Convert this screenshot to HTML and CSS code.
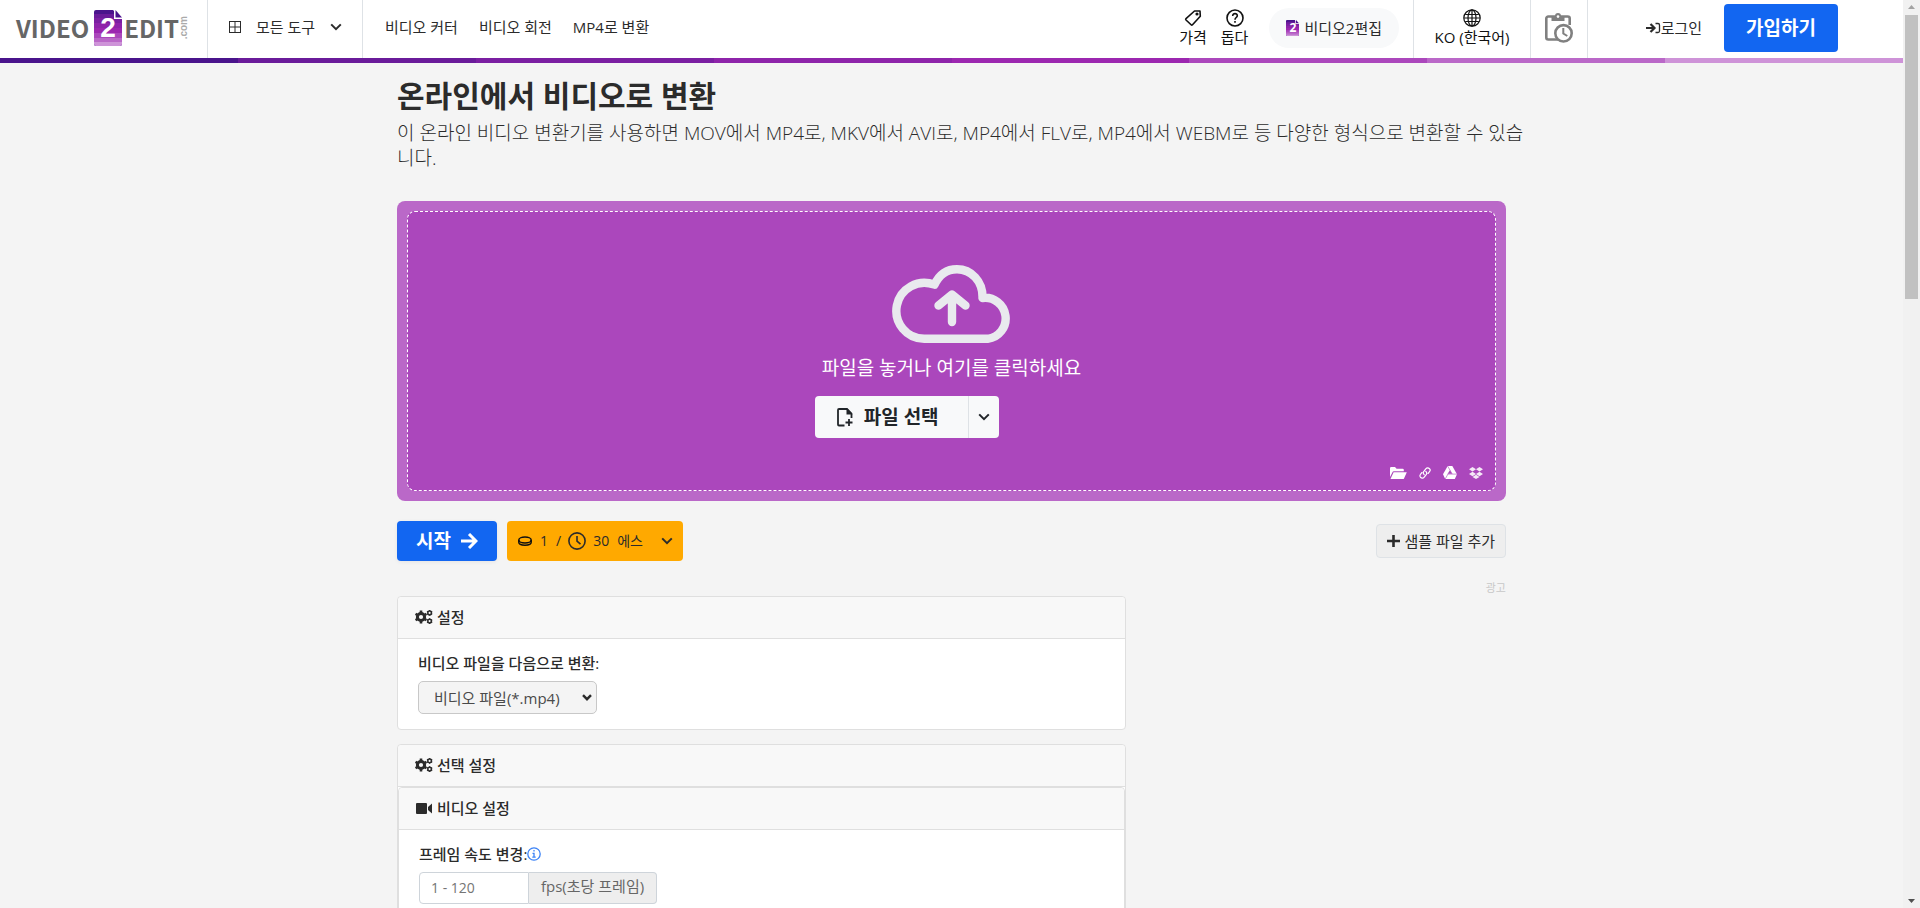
FILE: index.html
```html
<!DOCTYPE html>
<html lang="ko">
<head>
<meta charset="utf-8">
<meta name="viewport" content="width=device-width, initial-scale=1">
<title>온라인에서 비디오로 변환</title>
<link rel="stylesheet" href="styles.css">
</head>
<body>
<svg class="defs" aria-hidden="true">
  <symbol id="chevron" viewBox="0 0 12 8"><path d="M1.2 1.4 6 6.2l4.800-4.800" fill="none" stroke="currentColor" stroke-width="2"/></symbol>
  <symbol id="gears" viewBox="0 0 18 14">
    <circle cx="6" cy="7" r="3.600" fill="none" stroke="currentColor" stroke-width="3"/>
    <path d="M6 .6v2.400M6 11v2.400M.5 3.800l2 1.200M9.500 9l2 1.200M.5 10.200l2-1.200M9.500 5l2-1.200" stroke="currentColor" stroke-width="2.600"/>
    <circle cx="14.600" cy="2.900" r="1.800" fill="none" stroke="currentColor" stroke-width="1.500"/>
    <circle cx="14.600" cy="11.100" r="1.800" fill="none" stroke="currentColor" stroke-width="1.500"/>
    <path d="M14.600 0v1M14.600 4.800v1M12 1.400l1 .6M16.200 3.800l1 .6M12 4.400l1-.6M16.200 2l1-.6M14.600 8.200v1M14.600 13v1M12 9.600l1 .6M16.200 12l1 .6M12 12.600l1-.6M16.200 10.200l1-.6" stroke="currentColor" stroke-width="1.300"/>
  </symbol>
  <symbol id="filetile" viewBox="0 0 28 36">
    <path d="M2 0h17l9 9v25a2 2 0 0 1-2 2H2a2 2 0 0 1-2-2V2a2 2 0 0 1 2-2z" fill="#4a148c"/>
    <path d="M0 4h28v28H0z" fill="#6a1b9a"/><path d="M0 8h28v24H0z" fill="#7b1fa2"/>
    <path d="M0 13h28v19H0z" fill="#8e24aa"/><path d="M0 18h28v14H0z" fill="#9c27b0"/>
    <path d="M0 23h28v9H0z" fill="#ab47bc"/><path d="M0 28h28v4H0z" fill="#ba68c8"/>
    <path d="M0 32h28v2a2 2 0 0 1-2 2H2a2 2 0 0 1-2-2z" fill="#ce93d8"/>
    <path d="M20 0h8v9h-8z" fill="#fff"/><path d="M21.500 0 28 7.500h-6.500z" fill="#4a148c"/>
  </symbol>
</svg>

<div class="page">
  <header class="topbar">
    <a class="logo" href="#" aria-label="VIDEO2EDIT.com">
      <span class="logo-word">VIDEO</span>
      <span class="logo-tile"><svg width="28" height="36"><use href="#filetile"/></svg><b>2</b></span>
      <span class="logo-word">EDIT</span>
      <span class="logo-com">.com</span>
    </a>
    <button class="all-tools" type="button">
      <svg width="12" height="12" viewBox="0 0 12 12" fill="none" stroke="currentColor"><rect x=".5" y=".5" width="11" height="11"/><path d="M6 0v12M0 6h12"/></svg>
      <span>모든 도구</span>
      <svg width="12" height="8"><use href="#chevron"/></svg>
    </button>
    <nav class="links">
      <a href="#">비디오 커터</a>
      <a href="#">비디오 회전</a>
      <a href="#">MP4로 변환</a>
    </nav>
    <nav class="aux">
      <a class="stacked" href="#">
        <svg width="18" height="18" viewBox="0 0 18 18" fill="none" stroke="currentColor" stroke-width="1.600" stroke-linejoin="round"><path d="M10.500 2h5.500l.3 5.200-7.800 8.600a1 1 0 0 1-1.400 0L2 11a1 1 0 0 1 0-1.400z"/><circle cx="13" cy="5" r=".8" fill="currentColor"/></svg>
        가격</a>
      <a class="stacked" href="#">
        <svg width="18" height="18" viewBox="0 0 18 18" fill="none" stroke="currentColor" stroke-width="1.600"><circle cx="9" cy="9" r="8"/><path d="M6.700 7.100C6.700 3.600 11.400 4 11.300 6.800 11.200 8.500 9 8.600 9 10.700M9 12v1.700"/></svg>
        돕다</a>
      <a class="pill" href="#"><span class="mini-tile"><svg width="13" height="16" viewBox="0 0 28 36" preserveAspectRatio="none"><use href="#filetile"/></svg><b>2</b></span>비디오2편집</a>
    </nav>
    <a class="stacked lang" href="#">
      <svg width="18" height="18" viewBox="0 0 18 18" fill="none" stroke="currentColor" stroke-width="1.200"><circle cx="9" cy="9" r="8.200"/><ellipse cx="9" cy="9" rx="4" ry="8.200"/><path d="M9 1v16M1 9h16M2.200 5.500h13.600M2.200 12.500h13.600"/></svg>
      KO (한국어)</a>
    <a class="history" href="#" aria-label="기록">
      <svg width="28" height="30" viewBox="0 0 28 30" fill="none" stroke="currentColor" stroke-width="2.600"><path d="M13 26.500H3.300a2 2 0 0 1-2-2V5.500a2 2 0 0 1 2-2h19.400a2 2 0 0 1 2 2V12"/><path d="M6.500 3v5h13V3h-3.500a3 3 0 0 0-6 0z" fill="currentColor" stroke="none"/><circle cx="13" cy="3.600" r="1.300" fill="#fff" stroke="none"/><circle cx="18.500" cy="20.300" r="8.200" fill="#fff"/><path d="M18.300 15v5.500l4 2.500" stroke-width="2"/></svg>
    </a>
    <div class="account">
      <a class="login" href="#"><svg width="15" height="12" viewBox="0 0 15 12" fill="none" stroke="currentColor"><path d="M0 6h8M4.500 2l4 4-4 4" stroke-width="2.200"/><path d="M9.500 1.500H12a1.500 1.500 0 0 1 1.500 1.500v6a1.500 1.500 0 0 1-1.500 1.500H9.500" stroke-width="1.300"/></svg>로그인</a>
      <a class="signup" href="#">가입하기</a>
    </div>
  </header>
  <div class="stripes"><i></i><i></i><i></i><i></i><i></i><i></i><i></i><i></i></div>

  <main class="container">
    <h1>온라인에서 비디오로 변환</h1>
    <p class="lead">이 온라인 비디오 변환기를 사용하면 MOV에서 MP4로, MKV에서 AVI로, MP4에서 FLV로, MP4에서 WEBM로 등 다양한 형식으로 변환할 수 있습니다.</p>

    <section class="dropzone">
      <div class="dropzone-inner">
        <div class="drop-content">
          <svg class="cloud" width="120" height="78" viewBox="0 0 120 78" fill="none" stroke="#e9eaee" stroke-width="8.400" stroke-linecap="round" stroke-linejoin="round"><path d="M32.200 73.800h63.500A20.200 20.200 0 0 0 90.500 33C91 16 79 4.200 65 4.200 55 4.200 47 10 42.500 19.700A28 28 0 1 0 32.200 73.800z"/><path d="M60 57V30M46.500 40.500 60 29.500l13.500 11"/></svg>
          <p>파일을 놓거나 여기를 클릭하세요</p>
          <div class="choose">
            <button class="choose-main" type="button"><svg width="17" height="19" viewBox="0 0 17 19" fill="none" stroke="currentColor" stroke-width="1.800"><path d="M7.500 17.500H2a1 1 0 0 1-1-1V2a1 1 0 0 1 1-1h8l4.500 4.500V10"/><path d="M9.500 0 15.500 6.500h-6z" fill="currentColor" stroke="none"/><path d="M12 11v7M8.500 14.500h7"/></svg>파일 선택</button>
            <button class="choose-more" type="button" aria-label="더 보기"><svg width="12" height="8"><use href="#chevron"/></svg></button>
          </div>
        </div>
        <div class="sources">
          <a href="#" aria-label="폴더"><svg width="17" height="12" viewBox="0 0 17 12" fill="currentColor"><path d="M0 10V1.200A1.200 1.200 0 0 1 1.200 0H5l1.600 1.700h6A1.200 1.200 0 0 1 13.800 3v1.300H4A1.800 1.800 0 0 0 2.300 5.400z"/><path d="M3.600 5.300h13.200L14 11.400a1 1 0 0 1-.9.6H.5z"/></svg></a>
          <a href="#" aria-label="링크"><svg width="12" height="12" viewBox="0 0 12 12" fill="none" stroke="currentColor" stroke-width="1.200" stroke-linecap="round"><path d="M5.200 7.600C3.900 6.400 4.200 5 5 4.100l2-2.400a2.300 2.300 0 0 1 3.500 3L9.200 6.400M6.800 4.400C8.100 5.600 7.800 7 7 7.900l-2 2.400a2.300 2.300 0 0 1-3.500-3L2.800 5.600"/></svg></a>
          <a href="#" aria-label="구글 드라이브"><svg width="14" height="13" viewBox="0 0 14 13" fill="currentColor"><path d="M4.700 0h4.600L14 8.300 11.800 13H2.200L0 8.300z"/><path d="M7 4.200 5 7.800h4z" fill="#ab47bc"/><path d="M4.600 0 9.200 8M14 8.100H4.600M2.200 13 6.800 4.800" stroke="#ab47bc" stroke-width=".6"/></svg></a>
          <a href="#" aria-label="드롭박스"><svg width="14" height="12" viewBox="0 0 14 12" fill="currentColor"><path d="M3.500 0 7 2.300 3.500 4.600 0 2.300zM10.500 0 14 2.300l-3.500 2.300L7 2.300zM3.500 4.700 7 7 3.500 9.200 0 7zM10.500 4.700 14 7l-3.500 2.200L7 7zM7 7.800l3.500 2.200L7 12 3.500 10z" opacity=".88"/></svg></a>
        </div>
      </div>
    </section>

    <div class="actions">
      <button class="start" type="button">시작<svg width="17" height="16" viewBox="0 0 17 16" fill="none" stroke="currentColor" stroke-width="3"><path d="M0 8h14M8 1l7 7-7 7"/></svg></button>
      <button class="cost" type="button">
        <svg width="14" height="10" viewBox="0 0 14 10" fill="none" stroke="#111" stroke-width="1.500"><ellipse cx="7" cy="4" rx="6.200" ry="3"/><path d="M.8 4v2.300C.8 8 3.500 9.200 7 9.200S13.200 8 13.200 6.300V4"/></svg>
        <span>1</span><span>/</span>
        <svg class="clock" width="18" height="18" viewBox="0 0 18 18" fill="none" stroke="currentColor" stroke-width="1.600"><circle cx="9" cy="9" r="8.100"/><path d="M9 4v5.200l3.500 3"/></svg>
        <span>30</span><span>에스</span>
        <svg class="cost-more" width="12" height="8"><use href="#chevron"/></svg>
      </button>
      <button class="sample" type="button"><svg width="13" height="12" viewBox="0 0 13 12" stroke="currentColor" stroke-width="2.600"><path d="M6.500 0v12M0 6h13"/></svg>샘플 파일 추가</button>
    </div>
    <div class="ad">광고</div>

    <div class="settings">
      <section class="card">
        <h2><svg width="18" height="14"><use href="#gears"/></svg>설정</h2>
        <div class="card-body">
          <label for="target">비디오 파일을 다음으로 변환:</label>
          <div class="select-wrap">
            <select id="target"><option>비디오 파일(*.mp4)</option></select>
            <svg width="10" height="7" viewBox="0 0 10 7" fill="none" stroke="currentColor" stroke-width="2.400"><path d="M1 1.200 5 5.200l4-4"/></svg>
          </div>
        </div>
      </section>
      <section class="card">
        <h2><svg width="18" height="14"><use href="#gears"/></svg>선택 설정</h2>
        <section class="card nested">
          <h2><svg width="17" height="11" viewBox="0 0 17 11" fill="currentColor"><rect width="11" height="11" rx="1"/><path d="M12 4l4-3.500v10L12 7z"/></svg>비디오 설정</h2>
          <div class="card-body">
            <label for="fps">프레임 속도 변경:<svg width="14" height="14" viewBox="0 0 14 14" fill="none" stroke="#3b82f6" stroke-width="1.300"><circle cx="7" cy="7" r="6.200"/><path d="M7 3v1.500M5.500 6.300H7V10M5.300 10.200h3.400"/></svg></label>
            <div class="input-group">
              <input id="fps" type="text" placeholder="1 - 120">
              <span>fps(초당 프레임)</span>
            </div>
          </div>
        </section>
      </section>
    </div>
  </main>
</div>

<div class="scrollbar" aria-hidden="true">
  <svg width="17" height="15" viewBox="0 0 17 15"><path d="M5 9h7L8.500 5z" fill="#a3a3a3"/></svg>
  <div class="track"><div class="thumb"></div></div>
  <svg width="17" height="15" viewBox="0 0 17 15"><path d="M5 6h7l-3.500 4z" fill="#505050"/></svg>
</div>
</body>
</html>
```

FILE: styles.css
```css
* { box-sizing: border-box; }
body {
  margin: 0;
  display: flex;
  height: 100vh;
  overflow: hidden;
  background: #f4f4f4;
  color: #2b2b2b;
  font: 15px/20px "Open Sans", "Noto Sans CJK KR", sans-serif;
}
a { color: inherit; text-decoration: none; }
button, input, select { font: inherit; color: inherit; }
button { border: 0; cursor: pointer; }
svg { flex: none; display: block; }
h1, h2, p { margin: 0; }
.defs { position: absolute; width: 0; height: 0; }
.page { flex: 1; min-width: 0; overflow: hidden; }

/* top bar */
.topbar { display: flex; height: 58px; background: #fff; white-space: nowrap; }
.logo { display: flex; align-items: center; width: 208px; padding: 0 0 2px 16px; border-right: 1px solid #dee2e6; color: #666; }
.logo-word { font: bold 24px/36px "Noto Sans CJK KR", sans-serif; }
.logo-tile, .mini-tile { display: grid; place-items: center; color: #fff; }
.logo-tile > *, .mini-tile > * { grid-area: 1 / 1; }
.logo-tile { margin: 0 2px 0 5px; }
.logo-tile b { font: bold 28px/36px "Liberation Sans", sans-serif; }
.logo-com { font: bold 10px/10px "Liberation Sans", sans-serif; color: #aaa; writing-mode: vertical-rl; transform: rotate(180deg); }
.all-tools { display: flex; align-items: center; gap: 15px; width: 155px; padding: 0 0 4px 21px; background: none; border-right: 1px solid #dee2e6; }
.links { display: flex; align-items: center; gap: 21px; padding: 0 0 4px 22px; }
.aux { display: flex; align-items: center; gap: 14px; margin-left: auto; padding-right: 14px; border-right: 1px solid #dee2e6; }
.stacked { display: flex; flex-direction: column; align-items: center; justify-content: center; padding-bottom: 4px; color: #111; line-height: 18px; }
.stacked svg { margin-bottom: 1px; }
.pill { display: flex; align-items: center; gap: 5px; height: 40px; margin: 0 0 2px 7px; padding: 0 17px; border-radius: 20px; background: #f8f9fa; }
.mini-tile b { font-size: 12px; line-height: 16px; }
.lang { width: 117px; border-right: 1px solid #dee2e6; }
.history { display: grid; place-items: center; width: 57px; padding-bottom: 2px; border-right: 1px solid #dee2e6; color: #808080; }
.account { display: flex; align-items: center; gap: 22px; width: 315px; padding: 0 65px 2px 0; justify-content: flex-end; }
.login { display: flex; align-items: center; }
.signup { padding: 0 22px; border-radius: 4px; background: #1266f1; color: #fff; font-size: 19px; line-height: 48px; font-weight: 700; }
.stripes { display: grid; grid-template-columns: repeat(8, 1fr); height: 5px; }
.stripes i:nth-child(1) { background: #4a148c; }
.stripes i:nth-child(2) { background: #6a1b9a; }
.stripes i:nth-child(3) { background: #7b1fa2; }
.stripes i:nth-child(4) { background: #8e24aa; }
.stripes i:nth-child(5) { background: #9c27b0; }
.stripes i:nth-child(6) { background: #ab47bc; }
.stripes i:nth-child(7) { background: #ba68c8; }
.stripes i:nth-child(8) { background: #ce93d8; }

/* intro */
.container { max-width: 1139px; margin: 0 auto; padding: 14px 15px 0; }
h1 { font-size: 30px; line-height: 38px; font-weight: 700; }
.lead { margin: 6px -24px 0 0; font-size: 19px; line-height: 25px; font-weight: 300; }

/* drop area */
.dropzone { margin-top: 30px; padding: 10px; border-radius: 8px; background: #ba68c8; height: 300px; }
.dropzone-inner { display: flex; flex-direction: column; align-items: center; justify-content: space-between; height: 100%; padding: 53px 12px 11px; border: 1px dashed #fff; border-radius: 8px; background: #ab47bc; color: #fff; }
.drop-content { display: flex; flex-direction: column; align-items: center; }
.drop-content p { padding: 0 7px; margin: 12px 0 15px; font-size: 19px; line-height: 26px; }
.choose { display: flex; align-self: flex-start; height: 42px; color: #212529; }
.choose button { background: #f8f9fa; }
.choose-main { display: flex; align-items: center; gap: 10px; width: 153px; padding: 0 0 0 22px; border-radius: 4px 0 0 4px; font-size: 19px; font-weight: 700; }
.choose-more { display: grid; place-items: center; width: 31px; padding: 0; border-left: 1px solid #dee2e6; border-radius: 0 4px 4px 0; }
.sources { display: flex; align-items: center; gap: 12px; align-self: flex-end; }

/* actions */
.actions { display: flex; align-items: center; gap: 10px; margin-top: 20px; }
.start { display: flex; align-items: center; justify-content: center; gap: 10px; height: 40px; width: 100px; padding: 0; border-radius: 4px; background: #1266f1; color: #fff; font-size: 19px; font-weight: 700; box-shadow: 0 1px 4px #0001; }
.cost { display: flex; align-items: center; gap: 8px; height: 40px; width: 176px; padding: 0 10px 0 11px; border-radius: 4px; background: #ffa900; font-size: 14px; }
.clock { margin: 0 -1px; }
.cost-more { margin-left: auto; }
.sample { display: flex; align-items: center; gap: 4px; height: 34px; margin-left: auto; padding: 0 10px; border: 1px solid #dee2e6; border-radius: 4px; background: #eee; }
.ad { padding-top: 19px; text-align: right; font-size: 11px; line-height: 16px; color: #c8c8c8; }

/* settings */
.settings { display: flex; flex-direction: column; gap: 14px; max-width: 729px; }
.card { border: 1px solid #dfdfdf; border-radius: 4px; background: #fff; }
.card h2 { display: flex; align-items: center; gap: 4px; height: 42px; padding: 0 17px 1px; border-bottom: 1px solid #dfdfdf; border-radius: 4px 4px 0 0; background: #f8f8f8; font-size: 15px; font-weight: 500; }
.card-body { padding: 14px 20px 15px; }
.card-body label { display: flex; align-items: center; height: 20px; margin-bottom: 8px; font-weight: 500; }
.nested .card-body { padding-bottom: 120px; }
.select-wrap { display: inline-grid; align-items: center; width: 179px; vertical-align: top; }
.select-wrap > * { grid-area: 1 / 1; }
.select-wrap svg { justify-self: end; margin-right: 5px; pointer-events: none; }
select { appearance: none; width: 100%; height: 33px; padding: 0 15px; border: 1px solid #c8c8c8; border-radius: 5px; background: #f4f4f4; color: #4a4a4a; }
.input-group { display: flex; height: 32px; }
.input-group input { width: 110px; padding: 0 11px; border: 1px solid #ced4da; border-radius: 4px 0 0 4px; background: #fff; font-size: 14px; }
.input-group input::placeholder { color: #757575; opacity: 1; }
.input-group span { padding: 3px 12px; border: 1px solid #ced4da; border-left: 0; border-radius: 0 4px 4px 0; background: #eee; color: #666; }

/* scrollbar column */
.scrollbar { display: flex; flex-direction: column; width: 17px; background: #f1f1f1; }
.track { flex: 1; padding: 0 2px; }
.thumb { height: 284px; background: #c1c1c1; }
```
